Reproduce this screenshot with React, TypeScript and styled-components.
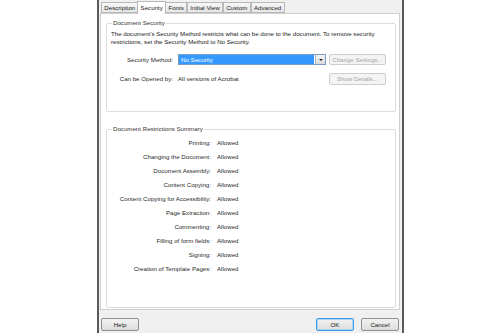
import React from 'react'
import styled, { createGlobalStyle } from 'styled-components'

const GlobalStyle = createGlobalStyle`
  html, body {
    margin: 0;
    padding: 0;
    background: #ffffff;
  }

  body {
    font-family: 'Liberation Sans', Arial, sans-serif;
    font-size: 6.15px;
    line-height: 8px;
    color: #2a2a2a;
  }
`

const StyledDialog = styled.div`
  display: flex;
  flex-direction: column;
  width: 300px;
  height: 333px;
  margin-left: 97px;
  padding: 0 2px 0 1px;
  box-sizing: content-box;

  background: #f0f0f0;
  border-left: 2px solid #5b5b5b;
  border-right: 2px solid #5b5b5b;
`

const StyledTabBar = styled.div`
  display: flex;
  align-items: flex-end;
  height: 13px;
  padding-left: 1px;
`

const StyledTab = styled.div<{ $active?: boolean }>`
  position: relative;
  height: ${(p) => (p.$active ? '12px' : '9px')};
  margin: ${(p) => (p.$active ? '0 -1px -1px -1px' : '0')};
  padding: 0 2.3px;
  z-index: ${(p) => (p.$active ? 2 : 1)};

  display: flex;
  align-items: center;

  background: ${(p) =>
    p.$active ? '#ffffff' : 'linear-gradient(#f7f7f7, #e6e6e6)'};
  border: 1px solid #b9b9b9;
  border-bottom: ${(p) => (p.$active ? 'none' : '1px solid #b9b9b9')};
  color: #222222;
  white-space: nowrap;
`

const StyledPanel = styled.div`
  height: 297px;
  padding: 5px 3px 0 5px;
  box-sizing: border-box;

  background: #ffffff;
  border: 1px solid #cfcfcf;
`

const StyledGroup = styled.fieldset<{ $height: number; $gap?: number }>`
  height: ${(p) => p.$height}px;
  margin: ${(p) => p.$gap || 0}px 0 0 0;
  padding: 0 4px;
  box-sizing: border-box;
  min-width: 0;

  border: 1px solid #dcdcdc;
  border-radius: 2px;
`

const StyledLegend = styled.legend`
  margin-left: 1px;
  padding: 0 1px;
  color: #333333;
`

const StyledText = styled.p`
  margin: 3px 0 0 0;
  color: #222222;
`

const StyledFieldRow = styled.div<{ $top: number; $height: number }>`
  display: flex;
  align-items: center;
  height: ${(p) => p.$height}px;
  margin-top: ${(p) => p.$top}px;
`

const StyledLabel = styled.div<{ $width: number }>`
  width: ${(p) => p.$width}px;
  flex-shrink: 0;
  text-align: right;
  white-space: nowrap;
  color: #2a2a2a;
`

const StyledValue = styled.div<{ $gap: number }>`
  flex: 1;
  margin-left: ${(p) => p.$gap}px;
  white-space: nowrap;
  color: #2a2a2a;
`

const StyledSelect = styled.div`
  display: flex;
  align-items: stretch;
  width: 148px;
  height: 11px;
  margin-left: 5px;
  box-sizing: border-box;

  border: 1px solid #7a9cc4;
  background: #ffffff;
`

const StyledSelectText = styled.div`
  flex: 1;
  padding-left: 2px;
  line-height: 9px;

  background: #3399ff;
  color: #ffffff;
`

const StyledArrow = styled.div`
  display: flex;
  align-items: center;
  justify-content: center;
  width: 9px;
  margin-left: 1px;

  background: linear-gradient(#f4f4f4, #dcdcdc);
  border-left: 1px solid #b5b5b5;

  &::after {
    content: '';
    border-left: 2px solid transparent;
    border-right: 2px solid transparent;
    border-top: 2px solid #222222;
  }
`

const StyledButton = styled.div<{
  $width: number
  $height: number
  $disabled?: boolean
  $default?: boolean
  $inset?: number
}>`
  display: flex;
  align-items: center;
  justify-content: center;
  width: ${(p) => p.$width}px;
  height: ${(p) => p.$height}px;
  margin-right: ${(p) => p.$inset || 0}px;
  flex-shrink: 0;
  box-sizing: border-box;

  background: ${(p) => (p.$disabled ? '#f4f4f4' : 'linear-gradient(#f2f2f2, #dcdcdc)')};
  border: 1px solid ${(p) => (p.$default ? '#3c9be6' : p.$disabled ? '#cdcdcd' : '#8f8f8f')};
  border-radius: 2px;
  box-shadow: ${(p) => (p.$default ? 'inset 0 0 0 1px #a9d7f7' : 'none')};
  color: ${(p) => (p.$disabled ? '#a5a5a5' : '#222222')};
  white-space: nowrap;
`

const StyledSummaryRow = styled.div<{ $first?: boolean }>`
  display: flex;
  align-items: center;
  height: 14px;
  margin-top: ${(p) => (p.$first ? '3px' : '0')};
`

const StyledFooter = styled.div`
  display: flex;
  align-items: center;
  gap: 7px;
  margin-top: 8px;
  padding: 0 1px;
`

const StyledSpacer = styled.div`
  flex: 1;
`

const tabs = ['Description', 'Security', 'Fonts', 'Initial View', 'Custom', 'Advanced']

const restrictions = [
  'Printing:',
  'Changing the Document:',
  'Document Assembly:',
  'Content Copying:',
  'Content Copying for Accessibility:',
  'Page Extraction:',
  'Commenting:',
  'Filling of form fields:',
  'Signing:',
  'Creation of Template Pages:',
]

const App: React.FC = () => {
  return (
    <>
      <GlobalStyle />
      <StyledDialog>
        <StyledTabBar>
          {tabs.map((tab) => (
            <StyledTab key={tab} $active={tab === 'Security'}>
              {tab}
            </StyledTab>
          ))}
        </StyledTabBar>
        <StyledPanel>
          <StyledGroup $height={93}>
            <StyledLegend>Document Security</StyledLegend>
            <StyledText>
              The document's Security Method restricts what can be done to the document. To remove security
              <br />
              restrictions, set the Security Method to No Security.
            </StyledText>
            <StyledFieldRow $top={8} $height={11}>
              <StyledLabel $width={62}>Security Method:</StyledLabel>
              <StyledSelect>
                <StyledSelectText>No Security</StyledSelectText>
                <StyledArrow />
              </StyledSelect>
              <StyledValue $gap={0} />
              <StyledButton $width={57} $height={11} $disabled $inset={5}>
                Change Settings...
              </StyledButton>
            </StyledFieldRow>
            <StyledFieldRow $top={8} $height={12}>
              <StyledLabel $width={62}>Can be Opened by:</StyledLabel>
              <StyledValue $gap={5}>All versions of Acrobat</StyledValue>
              <StyledButton $width={57} $height={12} $disabled $inset={5}>
                Show Details...
              </StyledButton>
            </StyledFieldRow>
          </StyledGroup>
          <StyledGroup $height={183} $gap={13}>
            <StyledLegend>Document Restrictions Summary</StyledLegend>
            {restrictions.map((label, i) => (
              <StyledSummaryRow key={label} $first={i === 0}>
                <StyledLabel $width={100}>{label}</StyledLabel>
                <StyledValue $gap={6}>Allowed</StyledValue>
              </StyledSummaryRow>
            ))}
          </StyledGroup>
        </StyledPanel>
        <StyledFooter>
          <StyledButton $width={38} $height={13}>
            Help
          </StyledButton>
          <StyledSpacer />
          <StyledButton $width={38} $height={13} $default>
            OK
          </StyledButton>
          <StyledButton $width={38} $height={13}>
            Cancel
          </StyledButton>
        </StyledFooter>
      </StyledDialog>
    </>
  )
}

export default App
